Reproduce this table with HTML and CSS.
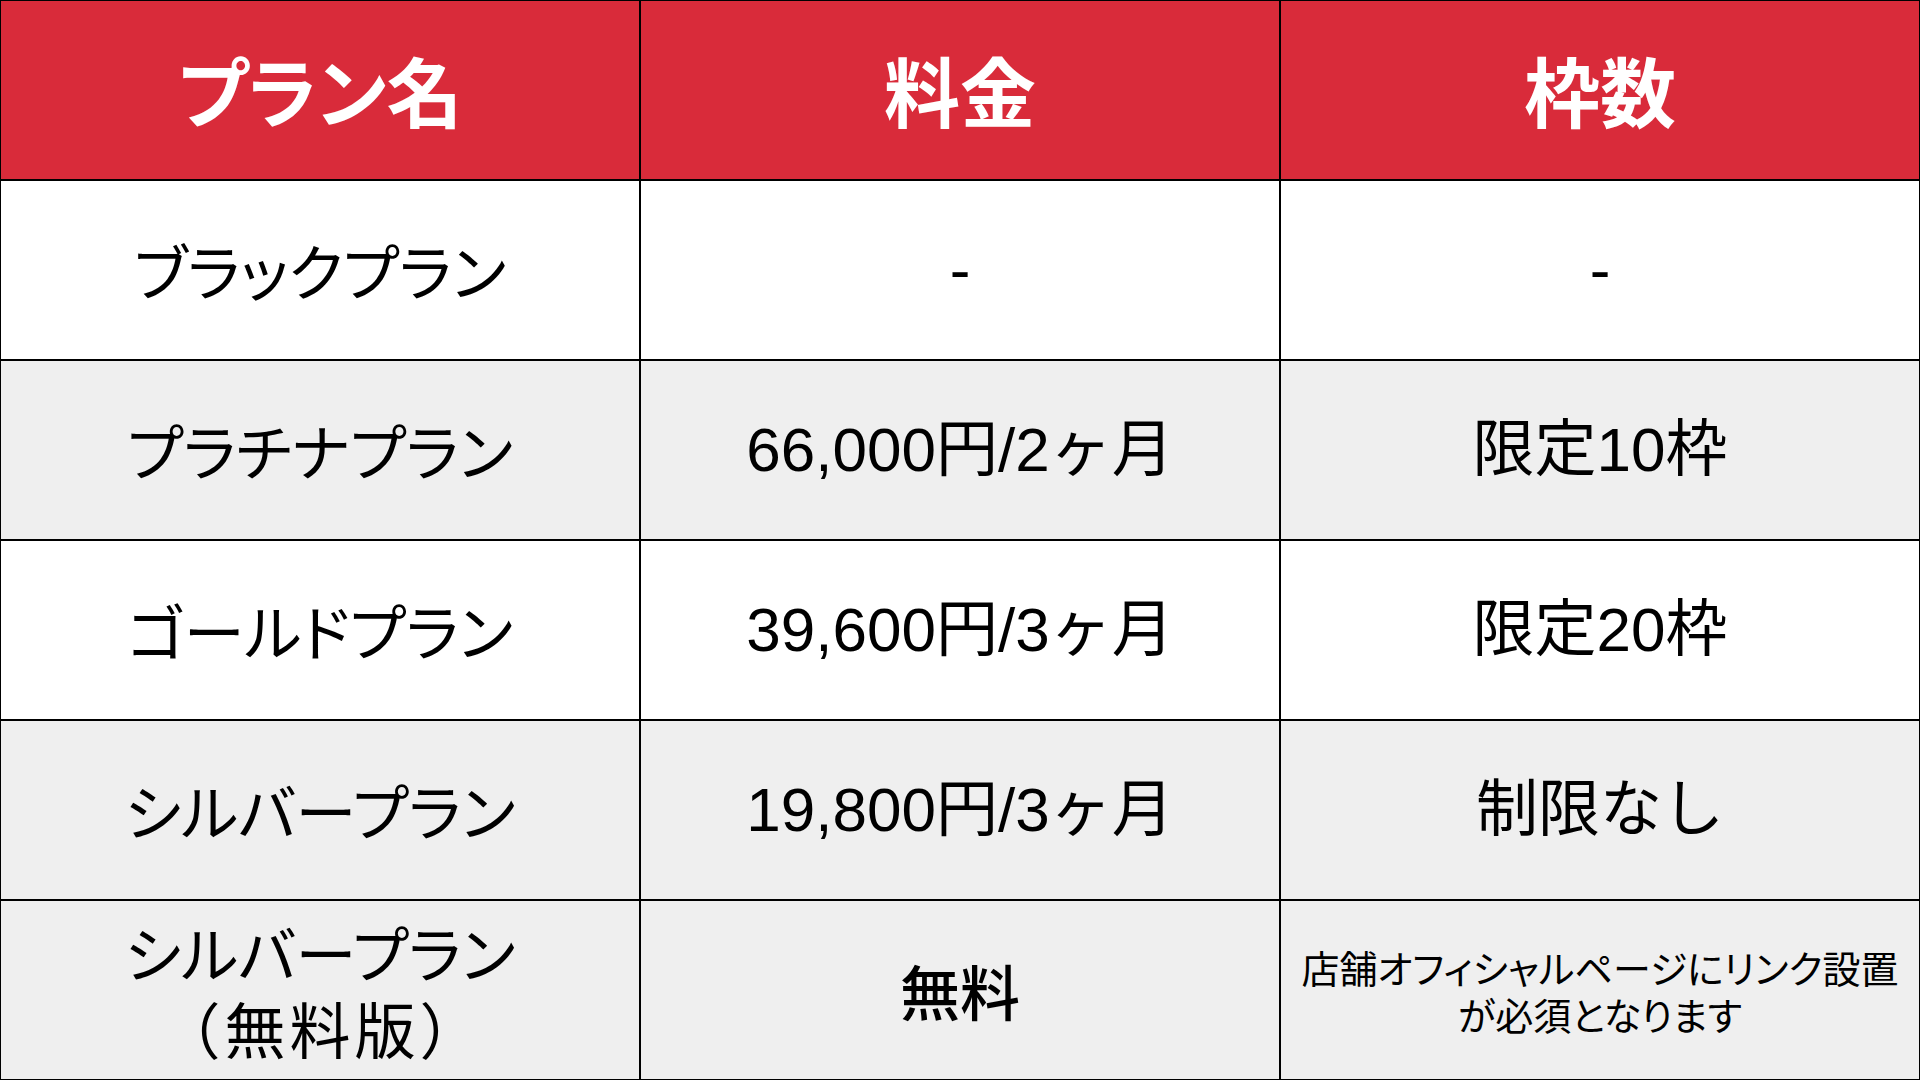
FILE: index.html
```html
<!DOCTYPE html>
<html lang="ja">
<head>
<meta charset="utf-8">
<title>プラン一覧</title>
<link rel="stylesheet" href="styles.css">
</head>
<body>
<div class="table">
  <div class="cell head">プラン名</div>
  <div class="cell head">料金</div>
  <div class="cell head">枠数</div>

  <div class="cell name">ブラックプラン</div>
  <div class="cell val">-</div>
  <div class="cell val">-</div>

  <div class="cell name gray">プラチナプラン</div>
  <div class="cell val gray">66,000円/2ヶ月</div>
  <div class="cell val gray">限定10枠</div>

  <div class="cell name">ゴールドプラン</div>
  <div class="cell val">39,600円/3ヶ月</div>
  <div class="cell val">限定20枠</div>

  <div class="cell name gray">シルバープラン</div>
  <div class="cell val gray">19,800円/3ヶ月</div>
  <div class="cell val gray">制限なし</div>

  <div class="cell name gray two">
    <span class="line">シルバープラン</span>
    <span class="line full">（無料版）</span>
  </div>
  <div class="cell val gray free">無料</div>
  <div class="cell note gray">
    <span class="line">店舗オフィシャルページにリンク設置</span>
    <span class="line">が必須となります</span>
  </div>
</div>
</body>
</html>
```

FILE: styles.css
```css
html, body {
  margin: 0;
  padding: 0;
  width: 1920px;
  height: 1080px;
  overflow: hidden;
}

.table {
  box-sizing: border-box;
  width: 1920px;
  height: 1080px;
  padding: 1px;
  background: #000;
  display: grid;
  grid-template-columns: repeat(3, 1fr);
  grid-template-rows: repeat(6, 1fr);
  gap: 2px;
  font-family: "Liberation Sans", "Noto Sans CJK JP", sans-serif;
  color: #000;
}

.cell {
  background: #fff;
  display: flex;
  align-items: center;
  justify-content: center;
  text-align: center;
  font-size: 62px;
  line-height: 1.2;
}

.gray {
  background: #efefef;
}

.head {
  background: #d92b3a;
  color: #fff;
  font-family: "Noto Sans CJK JP", sans-serif;
  font-weight: 700;
  font-size: 76px;
  font-feature-settings: "palt";
}

.name {
  font-family: "Noto Sans CJK JP", sans-serif;
  font-size: 61px;
  font-feature-settings: "palt";
}

.two,
.note {
  flex-direction: column;
}

.line {
  display: block;
}

.two .line {
  line-height: 76px;
}

.two .full {
  font-feature-settings: normal;
  letter-spacing: 4px;
  padding-left: 4px;
}

.free {
  font-family: "Noto Sans CJK JP", sans-serif;
  font-weight: 500;
  font-size: 60px;
}

.note {
  font-family: "Noto Sans CJK JP", sans-serif;
  font-size: 38px;
  font-feature-settings: "palt";
}

.note .line {
  line-height: 47px;
}
```
